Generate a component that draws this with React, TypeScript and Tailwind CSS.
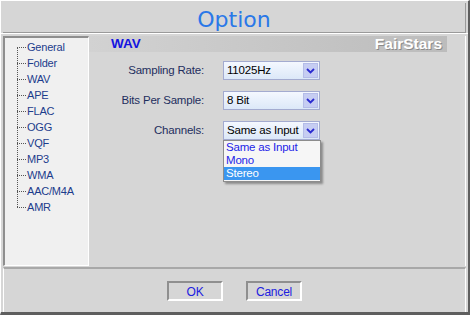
import React from 'react';

const tree = ['General', 'Folder', 'WAV', 'APE', 'FLAC', 'OGG', 'VQF', 'MP3', 'WMA', 'AAC/M4A', 'AMR'];

function Chevron() {
  return (
    <svg width="9" height="6" viewBox="0 0 9 6">
      <path d="M1 1 L4.5 4.5 L8 1" fill="none" stroke="#2a2ad0" strokeWidth="1.8" />
    </svg>
  );
}

function Combo({ value }: { value: string }) {
  return (
    <div className="flex h-[19px] w-[97px] items-stretch border border-[#a3abd0] bg-gradient-to-b from-[#f4f8ff] to-[#dce8f8]">
      <div className="flex-1 overflow-hidden whitespace-nowrap pl-[3px] text-[11.5px] leading-[17px] tracking-[-0.2px] text-black">{value}</div>
      <div className="m-px flex w-[15px] items-center justify-center border border-[#b4bce8] bg-[#c6cdf2]">
        <Chevron />
      </div>
    </div>
  );
}

export default function App() {
  return (
    <div className="flex h-[315px] w-[470px] flex-col bg-[#d6d6d6] font-['Liberation_Sans',_Arial,_sans-serif] text-[11px] tracking-[-0.2px]">
      <div className="flex h-[315px] flex-col border-b-[3px] border-r-[2px] border-[#5e5e5e] border-t border-l border-t-white border-l-white">
        {/* title */}
        <div className="mx-[2px] mt-[2px] flex h-[30px] items-center justify-center border-r border-b border-[#9a9a9a]">
          <span className="mt-[4px] font-['DejaVu_Sans',_sans-serif] text-[22px] leading-none tracking-normal text-[#2a78e8]">Option</span>
        </div>
        <div className="h-px bg-white" />

        <div className="flex h-[232px] pt-[2px]">
          {/* tree */}
          <div className="ml-[2px] h-[230px] w-[86px] border-l-2 border-t-2 border-[#8e8e8e] border-r border-b border-r-white border-b-white bg-[#f0f0f0]">
            <div className="relative ml-[12px] mt-px">
              <div className="absolute left-0 top-[8px] h-[160px] border-l border-dotted border-[#555]" />
              {tree.map((t) => (
                <div key={t} className="flex h-[16px] items-center">
                  <div className="w-[9px] border-t border-dotted border-[#555]" />
                  <span className="ml-[1px] text-[#1c3c8c]">{t}</span>
                </div>
              ))}
            </div>
          </div>

          {/* content */}
          <div className="mr-[2px] flex flex-1 flex-col border-r border-white">
            <div className="flex h-[16px] w-[358px] items-center justify-between bg-gradient-to-r from-[#d2d2d2] to-[#bcbcbc] pl-[22px] pr-[5px]">
              <span className="text-[13.5px] font-bold tracking-normal text-[#1414e0]">WAV</span>
              <span className="text-[15.5px] font-bold tracking-normal text-white [text-shadow:1px_1px_0_#8a8a8a]">FairStars</span>
            </div>

            <div className="relative mt-[9px] grid grid-cols-[115px_97px] gap-x-[19px] gap-y-[11px]">
              <div className="flex h-[19px] items-center justify-end text-[11.5px] text-[#1e2e5e]">Sampling Rate:</div>
              <Combo value="11025Hz" />
              <div className="flex h-[19px] items-center justify-end text-[11.5px] text-[#1e2e5e]">Bits Per Sample:</div>
              <Combo value="8 Bit" />
              <div className="flex h-[19px] items-center justify-end text-[11.5px] text-[#1e2e5e]">Channels:</div>
              <Combo value="Same as Input" />

              <div className="absolute left-[134px] top-[79px] w-[98px] border border-[#8c8c8c] bg-[#f6f6f6] pb-[1px] text-[11.5px] leading-[13px] text-[#2424e8] shadow-[2px_2px_2px_rgba(0,0,0,0.35)]">
                <div className="px-[2px]">Same as Input</div>
                <div className="px-[2px]">Mono</div>
                <div className="bg-[#3a96f0] px-[2px] text-white">Stereo</div>
              </div>
            </div>
          </div>
        </div>

        {/* buttons */}
        <div className="mx-[2px] mt-[1px] flex flex-1 items-center justify-center gap-[23px] border-t-2 border-l border-r border-t-[#a8a8a8] border-l-white border-r-white">
          <button className="h-[20px] w-[56px] border-2 border-l-[#8f8f8f] border-t-[#8f8f8f] border-r-white border-b-white text-[12px] text-[#2020e0]">OK</button>
          <button className="h-[20px] w-[56px] border-2 border-l-[#8f8f8f] border-t-[#8f8f8f] border-r-white border-b-white text-[12px] text-[#2020e0]">Cancel</button>
        </div>
      </div>
    </div>
  );
}
